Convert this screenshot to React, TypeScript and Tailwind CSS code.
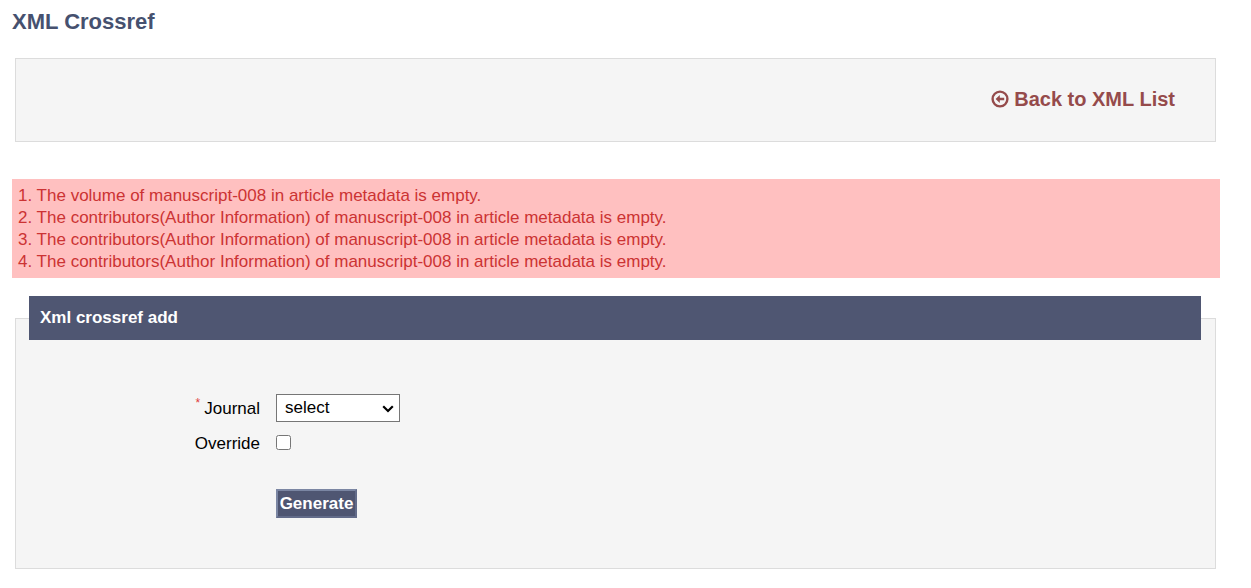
import React from "react";

const ERRORS: string[] = [
  "The volume of manuscript-008 in article metadata is empty.",
  "The contributors(Author Information) of manuscript-008 in article metadata is empty.",
  "The contributors(Author Information) of manuscript-008 in article metadata is empty.",
  "The contributors(Author Information) of manuscript-008 in article metadata is empty.",
];

function BackIcon() {
  return (
    <svg viewBox="0 0 18 18" className="w-[18px] h-[18px] flex-shrink-0" aria-hidden="true">
      <circle cx="9" cy="9" r="7.4" fill="none" stroke="currentColor" strokeWidth="2.4" />
      <path d="M4.6 9 L8.8 4.9 V7.8 H13.2 V10.2 H8.8 V13.1 Z" fill="currentColor" />
    </svg>
  );
}

function ErrorList({ errors }: { errors: string[] }) {
  return (
    <div className="mt-[37px] px-1.5 pt-1.5 pb-[5px] bg-[#ffc0c0] text-[#cc3333] leading-[22px]" role="alert">
      <ol>
        {errors.map((message, i) => (
          <li key={i}>
            {i + 1}. {message}
          </li>
        ))}
      </ol>
    </div>
  );
}

export default function App() {
  return (
    <main className="pl-3 pr-[31px] pt-[9px] pb-4 bg-white text-black text-[17px] font-['Liberation_Sans',Arial,sans-serif]">
      <h1 className="text-[22px] leading-[26px] font-bold text-[#46516f]">XML Crossref</h1>

      {/* Toolbar */}
      <div className="mt-[23px] ml-[3px] mr-1 h-[84px] px-10 pb-0.5 flex items-center justify-end bg-[#f5f5f5] border border-[#dcdcdc]">
        <a href="#" className="flex items-center gap-[5px] text-xl leading-6 font-bold text-[#954b4b]">
          <BackIcon />
          Back to XML List
        </a>
      </div>

      <ErrorList errors={ERRORS} />

      <form className="mt-[18px] ml-[3px] mr-1" onSubmit={(e) => e.preventDefault()}>
        <fieldset className="pl-[13px] pr-3.5 pb-[50px] bg-[#f5f5f5] border border-[#dcdcdc]">
          <legend className="w-full h-11 px-[11px] leading-[43px] font-bold text-white bg-[#4f5672]">
            Xml crossref add
          </legend>

          <div className="pt-[53px] grid grid-cols-[231px_1fr] gap-x-4 items-center">
            <label htmlFor="journal" className="pt-0.5 flex justify-end gap-1 leading-7">
              <span className="text-xs leading-4 text-[#e03c3c]">*</span>
              Journal
            </label>
            <div className="relative w-[124px] h-7">
              <select
                id="journal"
                className="w-full h-full pl-2 pr-6 appearance-none bg-white border border-[#767676] text-black"
              >
                <option>select</option>
              </select>
              <svg
                viewBox="0 0 12 8"
                className="absolute right-1.5 top-[11px] w-3 h-2 pointer-events-none"
                aria-hidden="true"
              >
                <path d="M1.2 1.2 L6 6 L10.8 1.2" fill="none" stroke="currentColor" strokeWidth="2.2" />
              </svg>
            </div>

            <label htmlFor="override" className="mt-2.5 text-right leading-[22px]">
              Override
            </label>
            <input id="override" type="checkbox" className="mt-1.5 w-[15px] h-[15px]" />

            <button
              type="submit"
              className="col-start-2 justify-self-start mt-[34px] w-[81px] h-[29px] border-2 border-t-[#7b86a3] border-l-[#7b86a3] border-b-[#636c8a] border-r-[#636c8a] bg-[#4f5672] font-bold text-white"
            >
              Generate
            </button>
          </div>
        </fieldset>
      </form>
    </main>
  );
}
